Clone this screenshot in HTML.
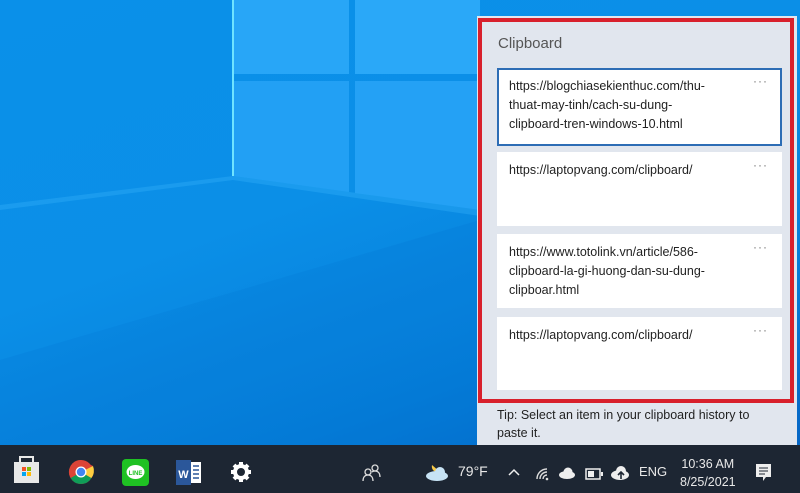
<!DOCTYPE html>
<html><head><meta charset="utf-8"><style>
*{margin:0;padding:0;box-sizing:border-box}
body{width:800px;height:493px;overflow:hidden;position:relative;font-family:"Liberation Sans",sans-serif;background:linear-gradient(160deg,#0a90e9 0%,#0b8fe7 40%,#057ed9 70%,#0560c0 100%)}
.abs{position:absolute}
.card{position:absolute;left:497px;width:285px;background:#fff;font-size:12.5px;color:#222;line-height:19px;padding:9px 12px}
.dots{position:absolute;right:14px;top:4px;color:#777;font-size:12px;letter-spacing:1px}
.tb{position:absolute;left:0;top:445px;width:800px;height:48px;background:#1d2633}
.t{position:absolute;color:#e8e8e8;font-size:13px}
</style></head><body>
<svg class="abs" style="left:0;top:0" width="480" height="445">
<polygon points="233,0 349,0 349,74 233,74" fill="#28a6f7"/>
<polygon points="355,0 480,0 480,74 355,74" fill="#2aa8f8"/>
<polygon points="233,81 349,81 349,192 233,176" fill="#22a0f4"/>
<polygon points="355,81 480,81 480,210 355,193" fill="#24a1f5"/>
<line x1="233" y1="0" x2="233" y2="176" stroke="#6fe3ff" stroke-width="2"/>
<polygon points="0,205 233,176 480,210 480,216 233,180 0,210" fill="#3fb8ff" opacity=".3"/>
<polygon points="0,360 480,220 480,445 0,445" fill="#0366c8" opacity=".12"/>
</svg>
<div class="abs" style="left:477px;top:16px;width:320px;height:429px;background:#e1e6ee"></div>
<div class="abs" style="left:478px;top:18px;width:316px;height:385px;border:4px solid #d8202c"></div>
<div class="abs" style="left:498px;top:35px;font-size:15px;color:#555">Clipboard</div>
<div class="card" style="top:68px;height:78px;border:2px solid #2d6db5;padding:7px 10px">https://blogchiasekienthuc.com/thu-<br>thuat-may-tinh/cach-su-dung-<br>clipboard-tren-windows-10.html<span class="dots" style="right:12px;top:2px">···</span></div>
<div class="card" style="top:152px;height:74px">https://laptopvang.com/clipboard/<span class="dots">···</span></div>
<div class="card" style="top:234px;height:74px">https://www.totolink.vn/article/586-<br>clipboard-la-gi-huong-dan-su-dung-<br>clipboar.html<span class="dots">···</span></div>
<div class="card" style="top:317px;height:73px">https://laptopvang.com/clipboard/<span class="dots">···</span></div>
<div class="abs" style="left:497px;top:406px;font-size:12.5px;line-height:18px;color:#222">Tip: Select an item in your clipboard history to<br>paste it.</div>
<div class="tb"></div>
<svg class="abs" style="left:0;top:445px" width="800" height="48">
<rect x="14" y="17" width="25" height="21" fill="#e8e8e8"/><path d="M20 17v-5h13v5" fill="none" stroke="#e8e8e8" stroke-width="2"/>
<rect x="22" y="22" width="4" height="4" fill="#f35325"/><rect x="27" y="22" width="4" height="4" fill="#81bc06"/><rect x="22" y="27" width="4" height="4" fill="#05a6f0"/><rect x="27" y="27" width="4" height="4" fill="#ffba08"/>
<circle cx="81" cy="27" r="12" fill="#db4437"/><path d="M81 27 L91.4 33 A12 12 0 0 1 70.6 33Z" fill="#0f9d58"/><path d="M81 27 L70.6 33 A12 12 0 0 1 81 15 L93 21Z" fill="#db4437"/><path d="M81 27 L93 21 A12 12 0 0 1 91.4 33Z" fill="#ffcd40"/><circle cx="81" cy="27" r="5.5" fill="#fff"/><circle cx="81" cy="27" r="4.2" fill="#4285f4"/>
<rect x="122" y="14" width="27" height="27" rx="4" fill="#1fc123"/><ellipse cx="135.5" cy="27" rx="9" ry="7" fill="#fff"/><text x="135.5" y="30" font-size="6" text-anchor="middle" fill="#1fc123" font-weight="bold" font-family="Liberation Sans">LINE</text>
<rect x="183" y="17" width="18" height="21" fill="#fff"/><rect x="176" y="15" width="15" height="25" fill="#2b579a"/><text x="183.5" y="33" font-size="11" font-weight="bold" fill="#fff" text-anchor="middle" font-family="Liberation Sans">W</text>
<path d="M193 21h6M193 25h6M193 29h6M193 33h6" stroke="#2b579a" stroke-width="1.5"/>
<circle cx="241" cy="27" r="6" fill="none" stroke="#fff" stroke-width="4"/><g stroke="#fff" stroke-width="4"><path d="M241 17v4M241 33v4M231 27h4M247 27h4M234 20l3 3M245 31l3 3M248 20l-3 3M237 31l-3 3"/></g>
<g fill="none" stroke="#ddd" stroke-width="1.3"><circle cx="368" cy="27" r="3"/><path d="M363 36c0-4 2-6 5-6s5 2 5 6"/><circle cx="375" cy="23" r="3"/><path d="M372 27c1-1 2-1 3-1 3 0 5 2 5 6"/></g>
<path d="M432 20a6 6 0 0 0 8 7" fill="#f7c948"/><ellipse cx="437" cy="31" rx="11" ry="5" fill="#c7e3f5"/><circle cx="440" cy="27" r="5" fill="#c7e3f5"/>
<path d="M509 30l5-5 5 5" fill="none" stroke="#eee" stroke-width="1.5"/>
<path d="M537 34a10 10 0 0 1 10-10M540 34a7 7 0 0 1 7-7M543 34a4 4 0 0 1 4-4" fill="none" stroke="#ddd" stroke-width="1.4"/><circle cx="547" cy="34" r="1.3" fill="#ddd"/>
<ellipse cx="567" cy="30" rx="8" ry="4" fill="#eee"/><circle cx="568" cy="27" r="4.5" fill="#eee"/>
<rect x="586" y="24" width="14" height="10" fill="none" stroke="#eee" stroke-width="1.5"/><rect x="588" y="26" width="6" height="6" fill="#eee"/><rect x="601" y="27" width="2" height="4" fill="#eee"/>
<ellipse cx="620" cy="30" rx="9" ry="5" fill="#eee"/><circle cx="621" cy="26" r="5" fill="#eee"/><path d="M621 34v-7M618 30l3-3 3 3" stroke="#1d2633" stroke-width="1.6" fill="none"/>
<path d="M756 19h15v13h-5l-3 4v-4h-7z" fill="#eee"/><path d="M759 23h9M759 26h9M759 29h6" stroke="#1d2633"/>
</svg>
<div class="t" style="left:458px;top:463px;font-size:14px">79°F</div>
<div class="t" style="left:639px;top:464px">ENG</div>
<div class="t" style="left:680px;top:455px;font-size:12.5px;text-align:center;line-height:18px">10:36 AM<br>8/25/2021</div>
</body></html>
